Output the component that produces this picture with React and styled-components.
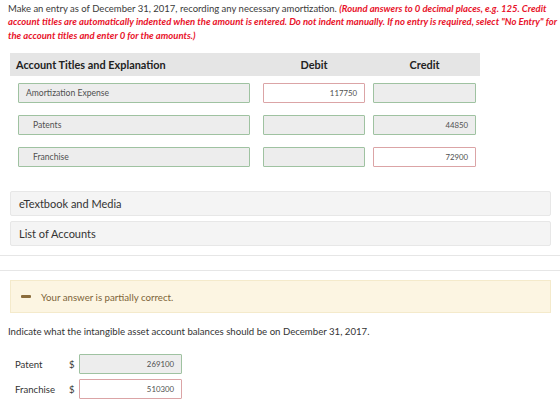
import React from 'react';
import styled, { createGlobalStyle } from 'styled-components';

const GlobalStyle = createGlobalStyle`
  body {
    margin      : 0;
    background  : #ffffff;
    font-family : Lato, "Open Sans", sans-serif;
    color       : #333333;
  }
`;

const journal = [
  { title: 'Amortization Expense', indent: false, debit: '117750', debitOk: false, credit: '', creditOk: true, titleOk: true },
  { title: 'Patents', indent: true, debit: '', debitOk: true, credit: '44850', creditOk: true, titleOk: true },
  { title: 'Franchise', indent: true, debit: '', debitOk: true, credit: '72900', creditOk: false, titleOk: true },
];

const balances = [
  { label: 'Patent', value: '269100', ok: true },
  { label: 'Franchise', value: '510300', ok: false },
];

const App = () => (
  <Page>
    <GlobalStyle />
    <Intro>
      Make an entry as of December 31, 2017, recording any necessary amortization.{' '}
      <Warn>
        (Round answers to 0 decimal places, e.g. 125. Credit account titles are automatically
        indented when the amount is entered. Do not indent manually. If no entry is required,
        select "No Entry" for the account titles and enter 0 for the amounts.)
      </Warn>
    </Intro>

    <Table>
      <HeadRow>
        <HeadCell>Account Titles and Explanation</HeadCell>
        <HeadCell $center>Debit</HeadCell>
        <HeadCell $center>Credit</HeadCell>
      </HeadRow>
      <Rows>
        {journal.map((r) => (
          <Row key={r.title}>
            <Field $w={232} $ok={r.titleOk} $indent={r.indent} $mr={13}>{r.title}</Field>
            <Field $w={102} $ok={r.debitOk} $num $mr={8}>{r.debit}</Field>
            <Field $w={103} $ok={r.creditOk} $num>{r.credit}</Field>
          </Row>
        ))}
      </Rows>
    </Table>

    <Panels>
      <Panel>eTextbook and Media</Panel>
      <Panel>List of Accounts</Panel>
    </Panels>

    <Divider />

    <Feedback>
      <Dash />
      Your answer is partially correct.
    </Feedback>

    <Question>Indicate what the intangible asset account balances should be on December 31, 2017.</Question>

    <Balances>
      {balances.map((b) => (
        <BalanceRow key={b.label}>
          <BalanceLabel>{b.label}</BalanceLabel>
          <Dollar>$</Dollar>
          <Field $w={103} $ok={b.ok} $num>{b.value}</Field>
        </BalanceRow>
      ))}
    </Balances>
  </Page>
);

const Page = styled.div`
  width      : 560px;
  padding    : 2px 3px 0 8px;
  box-sizing : border-box;
`;

const Intro = styled.p`
  margin      : 0;
  font-size   : 9.5px;
  line-height : 13.4px;
  color       : #3a3a3a;
`;

const Warn = styled.span`
  color       : #e8122a;
  font-weight : 700;
  font-style  : italic;
`;

const Table = styled.div`
  width       : 470px;
  margin      : 11px 0 0 2px;
`;

const HeadRow = styled.div`
  display               : grid;
  grid-template-columns : 249px 110px 111px;
  height                : 23px;
  align-items           : center;
  background            : #e5e5e5;
`;

const HeadCell = styled.div`
  font-size    : 10.9px;
  font-weight  : 700;
  color        : #222222;
  padding-left : ${(p) => (p.$center ? '0' : '6px')};
  text-align   : ${(p) => (p.$center ? 'center' : 'left')};
`;

const Rows = styled.div`
  display        : flex;
  flex-direction : column;
  gap            : 12px;
  padding        : 7px 0 0 8px;
`;

const Row = styled.div`
  display : flex;
`;

const Field = styled.div`
  box-sizing      : border-box;
  width           : ${(p) => p.$w}px;
  height          : 20px;
  margin-right    : ${(p) => p.$mr || 0}px;
  display         : flex;
  align-items     : center;
  justify-content : ${(p) => (p.$num ? 'flex-end' : 'flex-start')};
  padding         : ${(p) => (p.$num ? '0 7px 0 0' : p.$indent ? '0 0 0 14px' : '0 0 0 7px')};
  border          : 1px solid ${(p) => (p.$ok ? '#9fc2a1' : '#dba4a6')};
  border-radius   : 1px;
  background      : ${(p) => (p.$ok ? '#ededed' : '#ffffff')};
  font-size       : ${(p) => (p.$num ? '7.8px' : '8.6px')};
  color           : #505050;
`;

const Panels = styled.div`
  display        : flex;
  flex-direction : column;
  gap            : 5px;
  margin         : 24px 6px 0 2px;
`;

const Panel = styled.div`
  height        : 25px;
  box-sizing    : border-box;
  display       : flex;
  align-items   : center;
  padding-left  : 8px;
  background    : #f4f4f4;
  border        : 1px solid #e7e7e7;
  border-radius : 2px;
  font-size     : 11px;
  color         : #333333;
`;

const Divider = styled.div`
  height        : 14px;
  margin        : 9px -3px 0 -8px;
  border-top    : 1px solid #e6e6e6;
  border-bottom : 1px solid #e6e6e6;
`;

const Feedback = styled.div`
  height        : 33px;
  box-sizing    : border-box;
  margin        : 9px 6px 0 2px;
  display       : flex;
  align-items   : center;
  padding-left  : 10px;
  background    : #fcf5e2;
  border        : 1px solid #f4eacb;
  font-size     : 9.7px;
  color         : #7c6438;
`;

const Dash = styled.span`
  width         : 10px;
  height        : 3px;
  margin-right  : 10px;
  background    : #8b6d3c;
  border-radius : 1px;
`;

const Question = styled.p`
  margin    : 12px 0 0 0;
  font-size : 9.65px;
  color     : #333333;
`;

const Balances = styled.div`
  display        : flex;
  flex-direction : column;
  gap            : 5px;
  margin         : 17px 0 0 7px;
`;

const BalanceRow = styled.div`
  display     : flex;
  align-items : center;
`;

const BalanceLabel = styled.span`
  width     : 54px;
  font-size : 9.6px;
  color     : #333333;
`;

const Dollar = styled.span`
  width     : 10px;
  font-size : 9.6px;
  color     : #333333;
`;

export default App;
